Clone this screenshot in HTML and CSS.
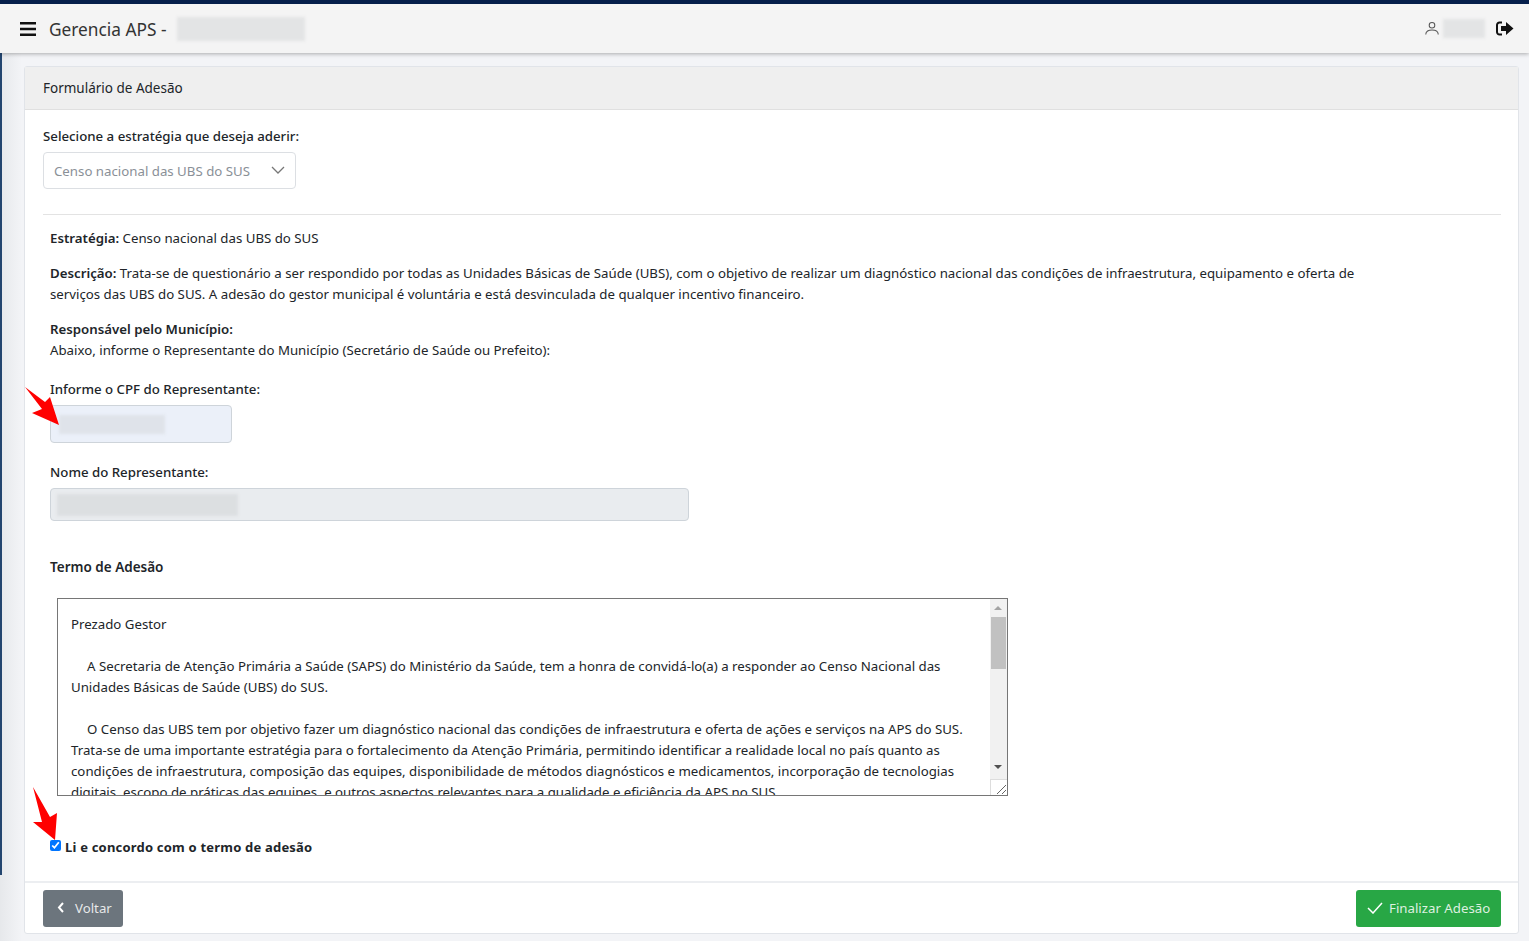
FILE: index.html
```html
<!DOCTYPE html>
<html lang="pt-BR">
<head>
    <meta charset="UTF-8">
    <title>Gerencia APS</title>
    <link rel="stylesheet" href="styles.css">
</head>
<body>
    <header class="navbar">
        <svg class="menu-icon" width="16" height="14" viewBox="0 0 16 14"><path d="M0 0h16v2.600H0zM0 5.700h16v2.600H0zM0 11.400h16V14H0z" fill="#111"/></svg>
        <span class="brand">Gerencia APS -</span>
        <span class="blur-box brand-blur"></span>
        <div class="user">
            <svg width="14" height="15" viewBox="0 0 15 15" fill="none" stroke="#555" stroke-width="1.100"><circle cx="7.500" cy="4" r="3"/><path d="M.8 14c0-3.400 3-5 6.700-5s6.700 1.600 6.700 5"/></svg>
            <span class="blur-box user-blur"></span>
            <svg class="logout" width="18" height="15" viewBox="0 0 18 15"><path d="M6 1.500H3.500A2.500 2.500 0 0 0 1 4v7a2.500 2.500 0 0 0 2.500 2.500H6" fill="none" stroke="#111" stroke-width="2"/><path d="M5 5h5V1l7.500 6.500L10 14v-4H5z" fill="#111"/></svg>
        </div>
    </header>

    <main class="content">
        <section class="card">
            <div class="card-header">Formulário de Adesão</div>
            <div class="card-body">
                <label class="field-label">Selecione a estratégia que deseja aderir:</label>
                <div class="select">
                    <span>Censo nacional das UBS do SUS</span>
                    <svg width="14" height="8" viewBox="0 0 14 8" fill="none" stroke="#777" stroke-width="1.300"><path d="M1 1l6 6 6-6"/></svg>
                </div>
                <hr class="divider">

                <div class="details">
                    <p class="line"><b>Estratégia:</b> Censo nacional das UBS do SUS</p>
                    <p class="line desc"><b>Descrição:</b> Trata-se de questionário a ser respondido por todas as Unidades Básicas de Saúde (UBS), com o objetivo de realizar um diagnóstico nacional das condições de infraestrutura, equipamento e oferta de serviços das UBS do SUS. A adesão do gestor municipal é voluntária e está desvinculada de qualquer incentivo financeiro.</p>
                    <p class="line"><b>Responsável pelo Município:</b><br>Abaixo, informe o Representante do Município (Secretário de Saúde ou Prefeito):</p>

                    <label class="field-label cpf-label">Informe o CPF do Representante:</label>
                    <div class="input cpf-input"><span class="blur-box cpf-blur"></span></div>

                    <label class="field-label name-label">Nome do Representante:</label>
                    <div class="input name-input"><span class="blur-box name-blur"></span></div>

                    <p class="term-title"><b>Termo de Adesão</b></p>

                    <div class="term-box">
                        <div class="term-text">
                            <p>Prezado Gestor</p>
                            <p class="indent">A Secretaria de Atenção Primária a Saúde (SAPS) do Ministério da Saúde, tem a honra de convidá-lo(a) a responder ao Censo Nacional das Unidades Básicas de Saúde (UBS) do SUS.</p>
                            <p class="indent">O Censo das UBS tem por objetivo fazer um diagnóstico nacional das condições de infraestrutura e oferta de ações e serviços na APS do SUS. Trata-se de uma importante estratégia para o fortalecimento da Atenção Primária, permitindo identificar a realidade local no país quanto as condições de infraestrutura, composição das equipes, disponibilidade de métodos diagnósticos e medicamentos, incorporação de tecnologias digitais, escopo de práticas das equipes, e outros aspectos relevantes para a qualidade e eficiência da APS no SUS.</p>
                        </div>
                        <div class="scrollbar">
                            <span class="arrow up"></span>
                            <span class="thumb"></span>
                            <span class="arrow down"></span>
                            <span class="grip">
                                <svg width="12" height="12" viewBox="0 0 12 12" stroke="#666" fill="none"><path d="M2 11l9-9M7 11l4-4"/></svg>
                            </span>
                        </div>
                    </div>

                    <label class="agree">
                        <input type="checkbox" checked>
                        <span>Li e concordo com o termo de adesão</span>
                    </label>
                </div>
            </div>
            <div class="card-footer">
                <button class="btn btn-back">
                    <svg width="8" height="11" viewBox="0 0 8 11" fill="none" stroke="#fff" stroke-width="2"><path d="M6 1L2 5.500 6 10"/></svg>
                    Voltar
                </button>
                <button class="btn btn-finish">
                    <svg width="16" height="12" viewBox="0 0 16 12" fill="none" stroke="#fff" stroke-width="1.500"><path d="M1 6l5 5L15 1"/></svg>
                    Finalizar Adesão
                </button>
            </div>
        </section>

        <svg class="pointer pointer-cpf" width="36" height="40" viewBox="0 0 36 40"><path d="M0 0l20 15 5-5 9 28-27-12 10-4z" fill="#f00"/></svg>
        <svg class="pointer pointer-check" width="26" height="56" viewBox="0 0 26 56"><path d="M0 0l17 30 7-4-2 27L0 35h9z" fill="#f00"/></svg>
    </main>
</body>
</html>
```

FILE: styles.css
```css
* {
    margin: 0;
    padding: 0;
    box-sizing: border-box;
}

body {
    font-family: "Noto Sans", sans-serif;
    font-size: 13.25px;
    line-height: 21px;
    color: #212529;
    background: #f3f4f7;
    border-top: 4px solid #051f4b;
    height: 941px;
    overflow: hidden;
}

b {
    font-weight: 600;
}

/* Blurred out data */
.blur-box {
    display: block;
    background: #e3e4e5;
    filter: blur(1.5px);
}

.navbar {
    position: relative;
    z-index: 2;
    display: flex;
    align-items: center;
    height: 49px;
    padding: 0 15px 0 20px;
    background: #f4f4f4;
    box-shadow: 0 1px 4px rgba(0,0,0,0.3);
}

.brand {
    margin: 2px 0 0 13px;
    font-size: 17.3px;
    color: #333;
}

.brand-blur {
    width: 128px;
    height: 24px;
    margin-left: 10px;
}

.user {
    display: flex;
    align-items: center;
    margin-left: auto;
}

.user-blur {
    width: 42px;
    height: 19px;
    margin-left: 4px;
}

.logout {
    margin-left: 11px;
}

.content {
    position: relative;
    height: 888px;
    padding: 13px 10px 0 24px;
    background: linear-gradient(to right, #e6e8eb, #f3f4f7 22px);
}

/* Dark strip of the collapsed sidebar */
.content::before {
    content: "";
    position: absolute;
    left: 0;
    top: 0;
    width: 2px;
    height: 822px;
    background: #23456f;
}

.card {
    display: flex;
    flex-direction: column;
    height: 868px;
    background: white;
    border: 1px solid #e1e4e9;
    border-radius: 3px;
}

.card-header {
    height: 43px;
    padding: 11px 18px;
    background: #efefef;
    border-bottom: 1px solid #e0e0e0;
    font-size: 13.5px;
}

.card-body {
    flex: 1;
    padding: 16px 17px 0 18px;
}

.field-label {
    display: block;
    font-weight: 500;
}

.select {
    display: flex;
    align-items: center;
    justify-content: space-between;
    width: 253px;
    height: 37px;
    margin-top: 5px;
    padding: 1px 10px 0;
    border: 1px solid #dcdfe3;
    border-radius: 4px;
    color: #8a9097;
}

.select svg {
    margin-top: -3px;
}

.divider {
    margin: 25px 0 13px;
    border: 0;
    border-top: 1px solid #e3e3e3;
}

.details {
    padding-left: 7px;
}

.line {
    margin-bottom: 14px;
}

.desc {
    max-width: 1310px;
}

.cpf-label {
    margin-top: 18px;
}

.input {
    display: flex;
    align-items: center;
    margin-top: 5px;
    border: 1px solid #ced4da;
    border-radius: 4px;
}

.cpf-input {
    width: 182px;
    height: 38px;
    background: #ebf0f9;
}

.cpf-blur {
    width: 106px;
    height: 19px;
    margin-left: 8px;
    background: #dfe3ea;
}

.name-label {
    margin-top: 19px;
}

.name-input {
    width: 639px;
    height: 33px;
    background: #e9ecef;
}

.name-blur {
    width: 181px;
    height: 22px;
    margin-left: 6px;
    background: #dcdfe1;
}

.term-title {
    margin-top: 36px;
    font-size: 13.5px;
}

.term-box {
    display: flex;
    width: 951px;
    height: 198px;
    margin: 20px 0 0 7px;
    border: 1px solid #767676;
}

.term-text {
    flex: 1;
    overflow: hidden;
    padding: 15px 13px 0 13px;
    height: 196px;
}

.term-text p {
    margin-bottom: 21px;
}

.indent {
    text-indent: 16px;
}

/* Drawn scrollbar of the textarea */
.scrollbar {
    position: relative;
    width: 17px;
    background: #f1f1f1;
}

.thumb {
    position: absolute;
    left: 1px;
    top: 18px;
    width: 15px;
    height: 52px;
    background: #c1c1c1;
}

.arrow {
    position: absolute;
    left: 4px;
    width: 0;
    height: 0;
    border-left: 4px solid transparent;
    border-right: 4px solid transparent;
}

.arrow.up {
    top: 7px;
    border-bottom: 4px solid #a3a3a3;
}

.arrow.down {
    top: 166px;
    border-top: 4px solid #505050;
}

.grip {
    position: absolute;
    left: 0;
    bottom: 0;
    display: flex;
    align-items: flex-end;
    justify-content: flex-end;
    width: 17px;
    height: 16px;
    background: white;
    border-left: 1px solid #ddd;
    border-top: 1px solid #ddd;
}

.agree {
    display: flex;
    align-items: center;
    gap: 4px;
    margin-top: 41px;
    font-size: 13px;
    font-weight: 700;
    letter-spacing: 0.2px;
}

.agree input {
    width: 11px;
    height: 11px;
    accent-color: #0075ff;
    margin-top: -4px;
}

.card-footer {
    display: flex;
    justify-content: space-between;
    height: 52px;
    padding: 7px 17px 0 18px;
    border-top: 2px solid #eceef1;
}

.btn {
    display: flex;
    align-items: center;
    height: 37px;
    border: none;
    border-radius: 3px;
    color: rgba(255,255,255,0.85);
    font: inherit;
    font-size: 13.25px;
}

.btn svg {
    margin-top: -2px;
}

.btn-back {
    width: 80px;
    padding-left: 14px;
    gap: 10px;
    background: #6c757d;
}

.btn-finish {
    width: 145px;
    padding-left: 11px;
    gap: 6px;
    background: #28a745;
}

/* Red arrows added over the screenshot */
.pointer {
    position: absolute;
}

.pointer-cpf {
    left: 25px;
    top: 334px;
}

.pointer-check {
    left: 33px;
    top: 734px;
}
```
